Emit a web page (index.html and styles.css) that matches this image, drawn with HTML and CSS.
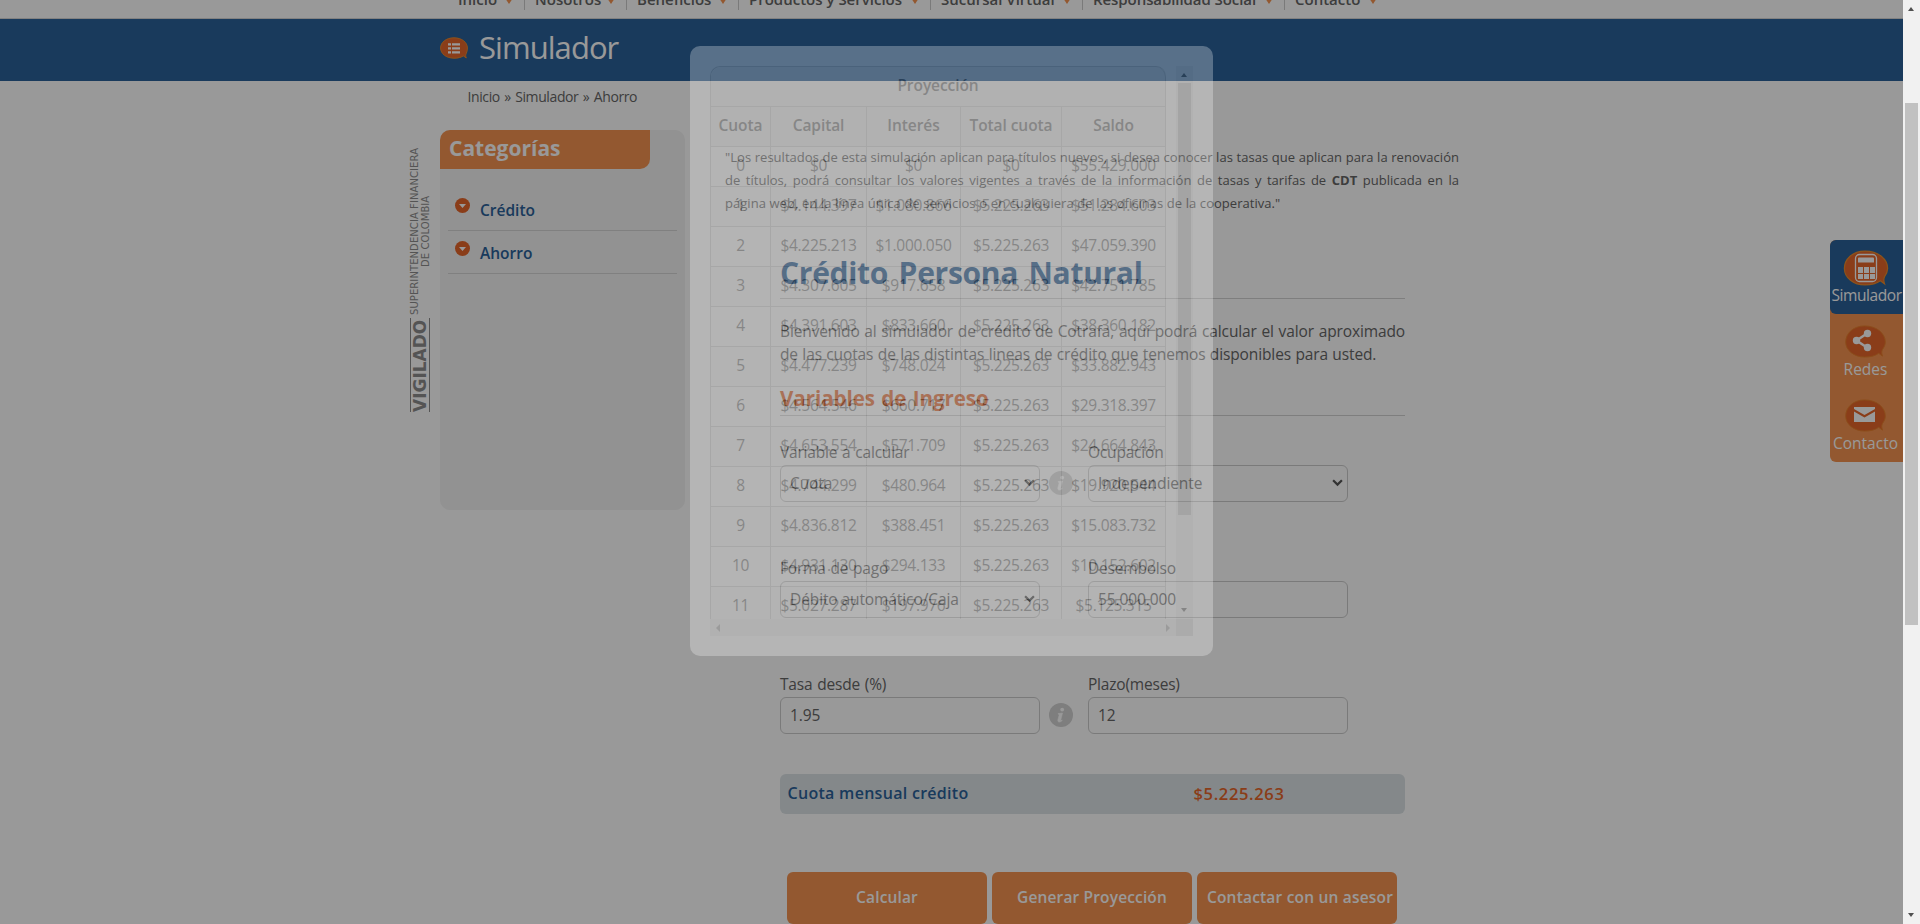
FILE: index.html
```html
<!DOCTYPE html>
<html lang="es">
<head>
<meta charset="utf-8">
<title>Simulador</title>
<link rel="stylesheet" href="styles.css">
</head>
<body>
<svg width="0" height="0" class="defs">
  <symbol id="bubble" viewBox="0 0 44 35"><path d="M21 1C9 1 1 9 1 18c0 9 9 16 20 16 6 0 11-1 15-4l4 3c-1-3-1-5 0-7 2-3 3-5 3-8C43 9 34 1 21 1z"/></symbol>
  <symbol id="info" viewBox="0 0 24 24"><circle cx="12" cy="12" r="12" fill="#d2d2d2"/><circle cx="13.2" cy="6.6" r="1.9" fill="#fff"/><path d="M9.2 10.6l4.3-.6-1.8 7.2c-.1.7.5.6 1.6-.2-.6 1.3-1.7 2-2.9 2-1.400 0-1.800-.9-1.500-2.200l1.200-4.600c.2-.8-.1-1-.9-1z" fill="#fff" stroke="#fff" stroke-width=".6"/></symbol>
</svg>
<div class="window">
  <div class="page">
    <nav class="nav">
      <a class="w1">Inicio<i></i></a><a class="w2">Nosotros<i></i></a><a class="w3">Beneficios<i></i></a><a class="w4">Productos y Servicios<i></i></a><a class="w5">Sucursal Virtual<i></i></a><a class="w6">Responsabilidad Social<i></i></a><a class="w7">Contacto<i></i></a>
    </nav>
    <header class="banner">
      <svg class="banner-icon" viewBox="0 0 28 22"><path d="M14 .8C6 .8.6 5.500.6 11S6 21.200 14 21.200c4 0 7-.7 9.300-2.300l3 2c-.8-1.700-.7-3 0-4.500.7-1.600 1.100-3.400 1.100-5.400C27.400 5.500 22 .8 14 .8z" fill="#e6662b" stroke="#e98a2c"/><path d="M8 6.200h3v2.200H8zM12 6.200h8v2.200h-8zM8 10.200h3v2.200H8zM12 10.200h8v2.200h-8zM8 14.200h3v2.200H8zM12 14.200h8v2.200h-8z" fill="#fff"/></svg>
      <h1>Simulador</h1>
    </header>
    <div class="crumbs">Inicio » Simulador » Ahorro</div>
    <div class="columns">
      <div class="vigilado"><strong>VIGILADO</strong><span>SUPERINTENDENCIA FINANCIERA<br>DE COLOMBIA</span></div>
      <aside class="side">
        <h3>Categorías</h3>
        <ul>
          <li><svg viewBox="0 0 15 15"><circle cx="7.500" cy="7.500" r="7.500" fill="#e6662b"/><path d="M4 6h7l-3.500 4z" fill="#fff"/></svg><a>Crédito</a></li>
          <li><svg viewBox="0 0 15 15"><circle cx="7.500" cy="7.500" r="7.500" fill="#e6662b"/><path d="M4 6h7l-3.500 4z" fill="#fff"/></svg><a>Ahorro</a></li>
        </ul>
      </aside>
      <main class="content">
        <p class="note">"Los resultados de esta simulación aplican para títulos nuevos, si desea conocer las tasas que aplican para la renovación de títulos, podrá consultar los valores vigentes a través de la información de tasas y tarifas de <b>CDT</b> publicada en la página web, en la línea única de servicios o en cualquiera de las oficinas de la cooperativa."</p>
        <section class="sim">
          <h2>Crédito Persona Natural</h2>
          <p class="intro">Bienvenido al simulador de crédito de Cotrafa, aquí podrá calcular el valor aproximado de las cuotas de las distintas lineas de crédito que tenemos disponibles para usted.</p>
          <h4>Variables de Ingreso</h4>
          <div class="form">
            <div class="field"><label>Variable a calcular</label><div class="box">Cuota<svg class="chev" viewBox="0 0 10 7"><path d="M1 1l4 4 4-4"/></svg></div></div>
            <svg class="info"><use href="#info"/></svg>
            <div class="field"><label>Ocupación</label><div class="box">Independiente<svg class="chev" viewBox="0 0 10 7"><path d="M1 1l4 4 4-4"/></svg></div></div>
            <div class="field"><label>Forma de pago</label><div class="box">Débito automático/Caja<svg class="chev" viewBox="0 0 10 7"><path d="M1 1l4 4 4-4"/></svg></div></div>
            <span></span>
            <div class="field"><label>Desembolso</label><div class="box">55.000.000</div></div>
            <div class="field"><label>Tasa desde (%)</label><div class="box">1.95</div></div>
            <svg class="info"><use href="#info"/></svg>
            <div class="field"><label>Plazo(meses)</label><div class="box">12</div></div>
          </div>
          <div class="result"><span>Cuota mensual crédito</span><b>$5.225.263</b></div>
          <div class="buttons"><a>Calcular</a><a>Generar Proyección</a><a class="ask">Contactar con un asesor</a></div>
        </section>
      </main>
    </div>
    <div class="tabs">
      <a class="tab active"><svg viewBox="0 0 46 36" width="46" height="36"><use href="#bubble" width="46" height="36" fill="#e6662b" stroke="#e98a2c" stroke-width="1.200"/><rect x="12.500" y="4.500" width="21" height="27" rx="4" fill="none" stroke="#fff" stroke-width="1.300"/><path d="M15 8.500q0-1 1-1h14q1 0 1 1v4H15zM15 17h5v6h-5zM21 17h5v6h-5zM27 17h5v6h-5zM15 24h5v5h-5zM21 24h5v5h-5zM27 24h5v5h-5z" fill="#fff"/></svg><span>Simulador</span></a>
      <a class="tab"><svg viewBox="0 0 43 33" width="43" height="33"><use href="#bubble" width="43" height="33" fill="#e6662b" stroke="#e87f2c"/><path d="M23 8.500L12.500 15.500 23 22.500" fill="none" stroke="#fff" stroke-width="2.500"/><circle cx="23.500" cy="8.500" r="3.700" fill="#fff"/><circle cx="12.500" cy="15.500" r="3.700" fill="#fff"/><circle cx="23.500" cy="22.500" r="3.700" fill="#fff"/></svg><span>Redes</span></a>
      <a class="tab"><svg viewBox="0 0 43 33" width="43" height="33"><use href="#bubble" width="43" height="33" fill="#e6662b" stroke="#e87f2c"/><path d="M10 8h21v2l-10.500 6L10 10zM10 12.500l10.500 6 10.500-6V23H10z" fill="#fff"/></svg><span>Contacto</span></a>
    </div>
    <div class="shade"></div>
    <div class="modal">
      <div class="viewport">
        <table>
          <colgroup><col class="c1"><col class="c2"><col class="c3"><col class="c4"><col class="c5"></colgroup>
          <thead><tr><th colspan="5">Proyección</th></tr><tr><th>Cuota</th><th>Capital</th><th>Interés</th><th>Total cuota</th><th>Saldo</th></tr></thead>
          <tbody>
            <tr><td>0</td><td>$0</td><td>$0</td><td>$0</td><td>$55.429.000</td></tr>
            <tr><td>1</td><td>$4.144.397</td><td>$1.080.866</td><td>$5.225.263</td><td>$51.284.603</td></tr>
            <tr><td>2</td><td>$4.225.213</td><td>$1.000.050</td><td>$5.225.263</td><td>$47.059.390</td></tr>
            <tr><td>3</td><td>$4.307.605</td><td>$917.658</td><td>$5.225.263</td><td>$42.751.785</td></tr>
            <tr><td>4</td><td>$4.391.603</td><td>$833.660</td><td>$5.225.263</td><td>$38.360.182</td></tr>
            <tr><td>5</td><td>$4.477.239</td><td>$748.024</td><td>$5.225.263</td><td>$33.882.943</td></tr>
            <tr><td>6</td><td>$4.564.546</td><td>$660.717</td><td>$5.225.263</td><td>$29.318.397</td></tr>
            <tr><td>7</td><td>$4.653.554</td><td>$571.709</td><td>$5.225.263</td><td>$24.664.843</td></tr>
            <tr><td>8</td><td>$4.744.299</td><td>$480.964</td><td>$5.225.263</td><td>$19.920.544</td></tr>
            <tr><td>9</td><td>$4.836.812</td><td>$388.451</td><td>$5.225.263</td><td>$15.083.732</td></tr>
            <tr><td>10</td><td>$4.931.130</td><td>$294.133</td><td>$5.225.263</td><td>$10.152.602</td></tr>
            <tr><td>11</td><td>$5.027.287</td><td>$197.976</td><td>$5.225.263</td><td>$5.125.315</td></tr>
          </tbody>
        </table>
      </div>
      <div class="vbar inner"><i class="up"></i><b></b><i class="down"></i></div>
      <div class="hbar"><i class="left"></i><i class="right"></i></div>
      <div class="corner"></div>
    </div>
  </div>
  <div class="vbar outer"><i class="up"></i><b></b><i class="down"></i></div>
</div>
</body>
</html>
```
FILE: styles.css
```css
* { box-sizing: border-box; }
html, body { margin: 0; overflow: hidden; }
body { font: 15.5px "Open Sans", "Noto Sans", sans-serif; color: #666; background: #fff; }
h1, h2, h3, h4, p, ul { margin: 0; padding: 0; }
.defs { position: absolute; }
.window { display: flex; width: 1920px; height: 924px; overflow: hidden; }
.page { position: relative; width: 1903px; height: 924px; overflow: hidden; }

/* main navigation */
.nav { display: flex; height: 19px; padding-left: 448px; overflow: hidden; border-bottom: 1px solid #d8d8d8; font-weight: 600; font-size: 15px; }
.nav a { display: flex; align-items: center; justify-content: space-between; height: 22px; margin-top: -12px; padding: 0 11px 0 10px; border-right: 1px solid #ccc; line-height: 20px; white-space: nowrap; }
.nav a:last-child { border: 0; padding-right: 15px; }
.nav i { margin-top: 3px; border: 4.5px solid transparent; border-top: 6px solid #f59350; border-bottom: 0; border-radius: 2px; }
.w1 { width: 77px; } .w2 { width: 102px; } .w3 { width: 112px; } .w4 { width: 192px; } .w5 { width: 152px; } .w6 { width: 202px; letter-spacing: -.07px; } .w7 { width: 107px; }

.banner { display: flex; align-items: center; gap: 11px; height: 62px; padding: 0 0 6px 440px; background: #2b6199; color: #fff; }
.banner-icon { width: 28px; height: 22px; margin-top: 2px; }
.banner h1 { font-size: 31px; font-weight: 400; letter-spacing: -.95px; line-height: 40px; }
.crumbs { height: 31px; padding-left: 467.5px; font-size: 14px; line-height: 31px; letter-spacing: -.4px; word-spacing: 1.2px; }
.columns { display: flex; align-items: flex-start; padding-left: 410px; }

.vigilado { display: flex; align-items: center; gap: 3px; width: 20px; height: 264px; margin-top: 36px; writing-mode: vertical-rl; transform: rotate(180deg); color: #8c8c8c; font-family: "DejaVu Sans", sans-serif; }
.vigilado strong { width: 20px; height: 94px; border: 1px solid #8c8c8c; border-width: 0 1px; font-size: 17px; line-height: 18px; }
.vigilado span { font-size: 10px; line-height: 11.5px; letter-spacing: .08px; text-align: center; white-space: nowrap; }

.side { width: 245px; height: 380px; margin: 18px 40px 0 10px; border-radius: 10px; background: #f3f3f3; }
.side h3 { width: 210px; height: 39px; padding-left: 9px; border-radius: 10px 0 10px 0; background: #f59350; color: #fff; font-size: 21px; line-height: 36px; }
.side ul { padding: 19px 8px 0; list-style: none; }
.side li { display: flex; gap: 10px; height: 43px; padding: 10px 0 0 7px; border-bottom: 1px solid #d5d5d5; color: #2b6199; font-weight: 600; }
.side svg { width: 15px; height: 15px; }
.side li a { padding-top: 2px; line-height: 20px; }

.content { width: 734px; padding-top: 34px; }
.note { font-size: 13px; line-height: 23px; letter-spacing: .03px; word-spacing: .2px; text-align: justify; }
.sim { width: 625px; margin: 30px 0 0 55px; }
.sim h2 { height: 54px; border-bottom: 1px solid #d2d2d2; color: #2b6199; font-size: 30px; font-weight: 700; line-height: 55px; letter-spacing: -.3px; word-spacing: 3px; }
.intro { margin-top: 21px; line-height: 23px; letter-spacing: -.12px; word-spacing: .5px; text-align: justify; }
.sim h4 { height: 37px; margin-top: 13px; border-bottom: 1px solid #d2d2d2; color: #e6662b; font-size: 20.5px; font-weight: 700; line-height: 38px; letter-spacing: -.02px; word-spacing: 1px; }
.form { display: grid; grid-template-columns: 260px 48px 260px; row-gap: 53px; margin-top: 23px; }
.field label { display: block; line-height: 26px; letter-spacing: -.2px; word-spacing: 1px; }
.box { display: flex; align-items: center; justify-content: space-between; height: 37px; padding: 0 4px 2px 9px; border: 1px solid #ccc; border-radius: 6px; letter-spacing: -.1px; }
.chev { width: 11px; height: 8px; margin-top: 1px; fill: none; stroke: #555; stroke-width: 2; }
.info { width: 24px; height: 24px; margin: 32px 0 0 9px; }
.result { display: flex; height: 40px; margin-top: 40px; padding-left: 7.5px; border-radius: 6px; background: #dce3e6; color: #2b6199; font-size: 16px; font-weight: 600; line-height: 39px; letter-spacing: .29px; }
.result span { width: 406px; }
.result b { color: #e6662b; font-size: 16.5px; font-weight: 600; letter-spacing: .65px; }
.buttons { display: flex; gap: 5px; margin-top: 58px; padding-left: 7px; }
.buttons a { width: 200px; height: 52px; border-radius: 6px; background: #f59350; color: #fff; font-weight: 600; line-height: 50px; letter-spacing: .15px; text-align: center; white-space: nowrap; }
.buttons .ask { padding-left: 6px; letter-spacing: .19px; }

/* floating shortcuts on the right edge */
.tabs { position: absolute; top: 240px; right: 0; width: 73px; height: 222px; border-radius: 6px 0 0 6px; background: #f59350; color: #fff; }
.tab { display: flex; flex-direction: column; align-items: center; height: 74px; padding: 11px 2px 0 0; line-height: 20px; }
.tab svg { margin-bottom: 1px; }
.tab.active { padding: 10px 0 0; border-radius: 6px 0 0 6px; background: #2b6199; }
.tab.active span { letter-spacing: -.42px; }
.tab.active svg { margin: 0 0 -1px -1px; }

.shade { position: absolute; inset: 0; background: rgba(0, 0, 0, .4); }

/* projection dialog, partly faded in */
.modal { position: absolute; left: 690px; top: 46px; display: grid; grid-template: 553px 17px / 466px 17px; width: 523px; height: 610px; padding: 20px; border-radius: 10px; background: #fff; opacity: .275; }
.viewport { overflow: hidden; }
table { width: 456px; border-collapse: separate; border-spacing: 0; table-layout: fixed; border: 1px solid #ccc; border-width: 1px 0 0 1px; border-radius: 10px 10px 0 0; color: #555; }
.c1 { width: 60px; } .c2 { width: 96px; } .c3 { width: 94px; } .c4 { width: 101px; } .c5 { width: 104px; }
th, td { height: 40px; padding: 0 0 2px; border: 1px solid #ccc; border-width: 0 1px 1px 0; text-align: center; line-height: 37px; }
th { background: #f0f0f0; font-weight: 600; letter-spacing: -.07px; }
thead tr:first-child th { border-radius: 10px 10px 0 0; }
td { background: #fbfbfb; letter-spacing: -.3px; }
tbody tr:nth-child(even) td { background: #f7f7f7; }

.vbar { position: relative; width: 17px; background: #f1f1f1; }
.vbar b { position: absolute; left: 2px; width: 13px; background: #c1c1c1; }
.outer { height: 924px; }
.outer b { top: 103px; height: 522px; }
.inner b { top: 17px; height: 432px; }
.up, .down { position: absolute; left: 5px; border: 3.5px solid transparent; }
.up { top: 7px; border-top: 0; border-bottom: 4px solid #505050; }
.down { bottom: 7px; border-bottom: 0; border-top: 4px solid #505050; }
.hbar { display: flex; align-items: center; justify-content: space-between; padding: 0 6px; background: #f1f1f1; }
.hbar i { border: 4px solid transparent; }
.left { border-left: 0 !important; border-right-color: #a3a3a3 !important; }
.right { border-right: 0 !important; border-left-color: #a3a3a3 !important; }
.corner { background: #dcdcdc; }
```
